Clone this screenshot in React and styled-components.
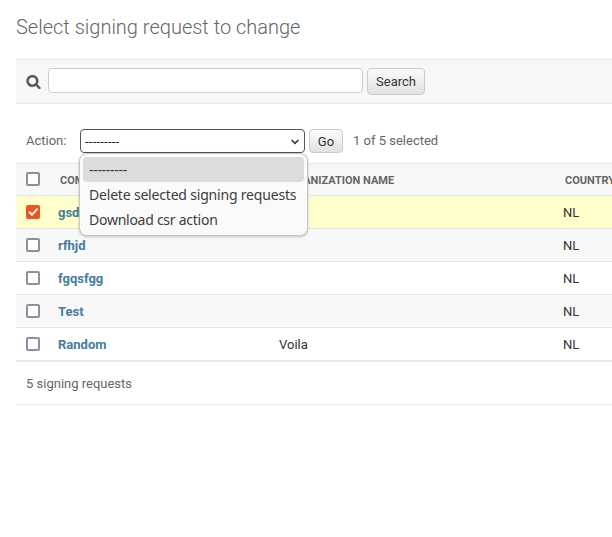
import React from "react";
import styled, { createGlobalStyle } from "styled-components";

const GlobalStyle = createGlobalStyle`
  html, body { margin: 0; background: #fff; overflow: hidden; }
  body { font-family: Roboto, "Liberation Sans", sans-serif; font-size: 13px; color: #333; }
  * { box-sizing: border-box; }
`;

const Page = styled.main`
  width: 612px;
  height: 537px;
  padding: 15px 0 0 16px;
  overflow: hidden;
`;

const Title = styled.h1`
  margin: 0;
  height: 44px;
  font-size: 20px;
  line-height: 24px;
  font-weight: 300;
  color: #666;
  white-space: nowrap;
`;

const Toolbar = styled.form`
  display: flex;
  align-items: flex-start;
  height: 45px;
  padding: 8px 0 0 10px;
  background: #f8f8f8;
  border-top: 1px solid #eaeaea;
  border-bottom: 1px solid #eaeaea;
`;

const SearchIcon = styled.svg`
  flex: none;
  width: 15px;
  height: 15px;
  margin: 6px 7px 0 0;
  fill: #555;
  stroke: #555;
  stroke-width: 40;
`;

const SearchInput = styled.input`
  width: 315px;
  height: 25px;
  margin: 0 4px 0 0;
  padding: 2px 5px;
  border: 1px solid #ccc;
  border-radius: 4px;
  background: #fff;
  font: inherit;
  outline: none;
`;

const Button = styled.button`
  width: ${(p) => p.$width}px;
  height: ${(p) => p.$height}px;
  padding: ${(p) => p.$drop || 0}px 0 0;
  border: 1px solid #ccc;
  border-radius: 4px;
  background: linear-gradient(#fbfbfb, #e2e2e2);
  color: #333;
  font: 13px/20px Roboto, sans-serif;
`;

const Actions = styled.div`
  display: flex;
  align-items: flex-start;
  height: 59px;
  padding: 25px 0 0 10px;
  color: #666;
`;

const ActionLabel = styled.span`
  width: 54px;
  line-height: 24px;
`;

const SelectWrap = styled.div`
  position: relative;
  width: 225px;
  margin-right: 4px;
`;

const SelectBox = styled.div`
  display: flex;
  align-items: center;
  justify-content: space-between;
  height: 24px;
  padding: 0 5px 0 4px;
  border: 1px solid #555459;
  border-radius: 4px;
  background: #fff;
  color: #222;
`;

const Dashes = styled.span`
  letter-spacing: ${(p) => p.$spacing}px;
`;

const Chevron = styled.svg`
  width: 8px;
  height: 6px;
  margin-top: 2px;
  fill: none;
  stroke: #333;
  stroke-width: 1.5;
`;

const Menu = styled.div`
  position: absolute;
  z-index: 2;
  top: 24px;
  left: -1px;
  width: 229px;
  height: 83px;
  padding: 3px;
  border: 1px solid #c6c6c6;
  border-radius: 8px;
  background: #fafafa;
  box-shadow: 0 1px 3px rgba(0, 0, 0, 0.22);
`;

const MenuItem = styled.div`
  height: 25px;
  padding-left: 6px;
  border-radius: 4px;
  background: ${(p) => (p.$active ? "#dcdcdc" : "transparent")};
  color: #3d3d3d;
  font: 14px/25px "Noto Sans", "Open Sans", sans-serif;
  letter-spacing: ${(p) => p.$spacing || 0}px;
  white-space: nowrap;
`;

const Counter = styled.span`
  margin-left: 10px;
  line-height: 23px;
`;

const Table = styled.div`
  border-top: 1px solid #e6e6e6;
`;

const Row = styled.div`
  display: grid;
  grid-template-columns: 42px 221px 284px 1fr;
  height: ${(p) => (p.$header ? 32 : 33)}px;
  line-height: ${(p) => (p.$header ? 33 : 34)}px;
  background: ${(p) => p.$bg};
  border-bottom: 1px solid #e6e6e6;
  white-space: nowrap;
`;

const HeadCell = styled.div`
  padding-left: 2px;
  font-size: 11px;
  font-weight: 700;
  color: #666;
`;

const NameCell = styled.div`
  font-weight: 700;
  color: #447e9b;
`;

const CheckCell = styled.div`
  padding: ${(p) => (p.$header ? 8 : 9)}px 0 0 10px;
  line-height: 0;
`;

const Check = styled.span`
  display: flex;
  width: 14px;
  height: 14px;
  border: ${(p) => (p.$on ? "0" : "2px solid #8f8f9d")};
  border-radius: 2px;
  background: ${(p) => (p.$on ? "#e95420" : "#fff")};
`;

const Tick = styled.svg`
  width: 14px;
  height: 14px;
  fill: none;
  stroke: #fff;
  stroke-width: 2;
  stroke-linecap: round;
  stroke-linejoin: round;
`;

const Footer = styled.div`
  height: 44px;
  padding-left: 10px;
  border-top: 1px solid #e8e8e8;
  border-bottom: 1px solid #eaeaea;
  color: #666;
  line-height: 43px;
`;

const requests = [
  { name: "gsd", org: "", selected: true },
  { name: "rfhjd", org: "" },
  { name: "fgqsfgg", org: "" },
  { name: "Test", org: "" },
  { name: "Random", org: "Voila" },
];

function rowColor(request, index) {
  if (request.selected) return "#ffffcc";
  return index % 2 ? "#f8f8f8" : "#fff";
}

function Checkbox({ on }) {
  return (
    <Check $on={on} role="checkbox" aria-checked={!!on}>
      {on && <Tick viewBox="0 0 14 14"><path d="M3.5 7.3 6 9.8 10.8 4.3" /></Tick>}
    </Check>
  );
}

export default function App() {
  return (
    <>
      <GlobalStyle />
      <Page>
        <Title>Select signing request to change</Title>
        <Toolbar>
          <SearchIcon viewBox="0 0 1792 1792">
            <path d="M1216 832q0-185-131.5-316.5t-316.5-131.5-316.5 131.5-131.5 316.5 131.5 316.5 316.5 131.5 316.5-131.5 131.5-316.5zm512 832q0 52-38 90t-90 38q-54 0-90-38l-343-342q-179 124-399 124-143 0-273.5-55.5t-225-150-150-225-55.5-273.5 55.5-273.5 150-225 225-150 273.5-55.5 273.5 55.5 225 150 150 225 55.5 273.5q0 220-124 399l343 343q37 37 37 90z" />
          </SearchIcon>
          <SearchInput aria-label="Search" />
          <Button type="button" $width={58} $height={27}>Search</Button>
        </Toolbar>
        <Actions>
          <ActionLabel>Action:</ActionLabel>
          <SelectWrap>
            <SelectBox>
              <Dashes $spacing={0.22}>---------</Dashes>
              <Chevron viewBox="0 0 8 6"><path d="M.6 1 4 4.4 7.4 1" /></Chevron>
            </SelectBox>
            <Menu>
              <MenuItem $active $spacing={-0.3}>---------</MenuItem>
              <MenuItem $spacing={-0.19}>Delete selected signing requests</MenuItem>
              <MenuItem $spacing={-0.26}>Download csr action</MenuItem>
            </Menu>
          </SelectWrap>
          <Button type="button" $width={34} $height={24} $drop={1}>Go</Button>
          <Counter>1 of 5 selected</Counter>
        </Actions>
        <Table>
          <Row $header $bg="#f8f8f8">
            <CheckCell $header><Checkbox /></CheckCell>
            <HeadCell>COMMON NAME</HeadCell>
            <HeadCell>ORGANIZATION NAME</HeadCell>
            <HeadCell>COUNTRY</HeadCell>
          </Row>
          {requests.map((request, index) => (
            <Row key={request.name} $bg={rowColor(request, index)}>
              <CheckCell><Checkbox on={request.selected} /></CheckCell>
              <NameCell>{request.name}</NameCell>
              <div>{request.org}</div>
              <div>NL</div>
            </Row>
          ))}
        </Table>
        <Footer>5 signing requests</Footer>
      </Page>
    </>
  );
}
